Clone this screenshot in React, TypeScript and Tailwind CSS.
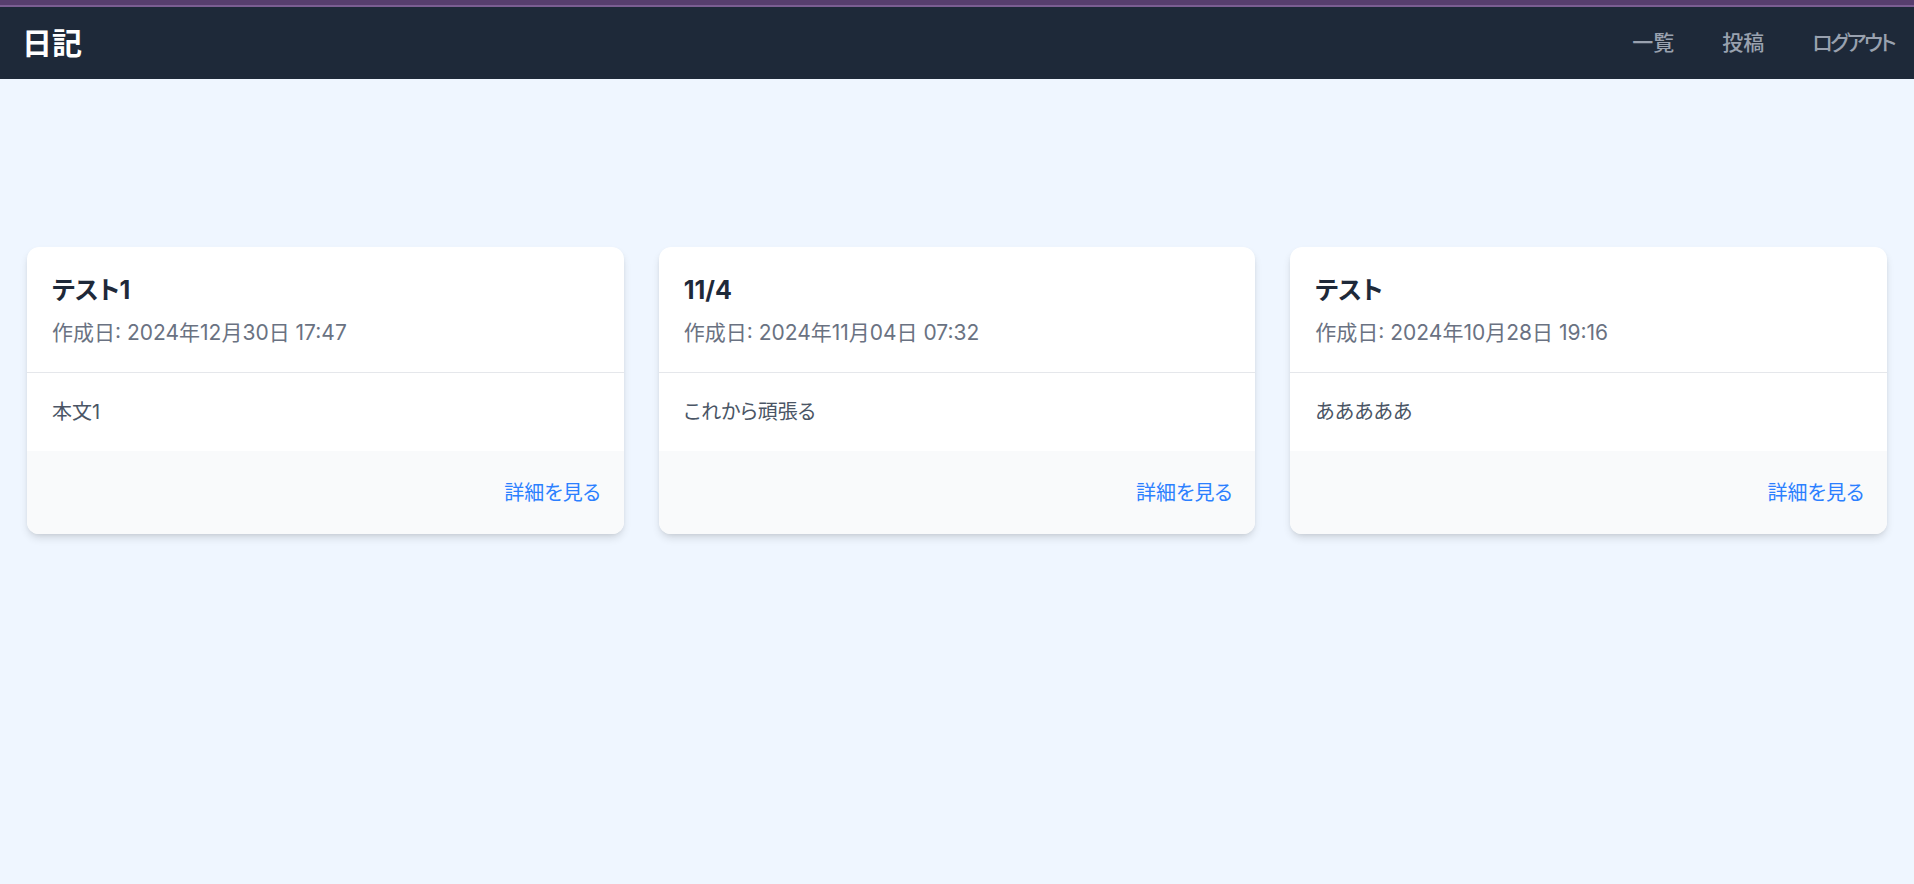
import React from 'react'

type Entry = {
  title: string
  createdAt: string
  body: string
}

const entries: Entry[] = [
  { title: 'テスト1', createdAt: '2024年12月30日 17:47', body: '本文1' },
  { title: '11/4', createdAt: '2024年11月04日 07:32', body: 'これから頑張る' },
  { title: 'テスト', createdAt: '2024年10月28日 19:16', body: 'あああああ' },
]

function Header() {
  return (
    <header>
      <div className="h-[5px] bg-[#573e6e]" />
      <div className="h-[2px] bg-[#7b5e93]" />
      <div className="h-[72px] bg-gray-800 flex items-center justify-between pl-[22px] pr-[20px]">
        <h1 className="text-[30px] leading-none font-bold text-white">日記</h1>
        <nav className="flex items-center gap-12">
          <a href="#" className="text-[21px] leading-[30px] font-medium text-gray-400">一覧</a>
          <a href="#" className="text-[21px] leading-[30px] font-medium text-gray-400">投稿</a>
          <a href="#" className="text-[21px] leading-[30px] font-medium text-gray-400 tracking-[-2.5px]">ログアウト</a>
        </nav>
      </div>
    </header>
  )
}

function EntryCard({ entry }: { entry: Entry }) {
  return (
    <div className="bg-white rounded-xl overflow-hidden shadow-[0_5px_8px_-1px_rgba(0,0,0,0.12),0_2px_5px_-2px_rgba(0,0,0,0.1)]">
      <div className="px-[25px] pt-[26px] pb-[24px] border-b border-gray-200">
        <h2 className="text-[25px] leading-[35px] font-bold text-gray-800">{entry.title}</h2>
        <p className="mt-[10px] text-[21px] leading-[30px] text-gray-500">作成日: {entry.createdAt}</p>
      </div>
      <div className="px-[25px] py-[24px]">
        <p className="text-[20px] leading-[30px] text-gray-600">{entry.body}</p>
      </div>
      <div className="bg-gray-50 pl-[25px] pr-[23px] pt-[27px] pb-[26px] flex justify-end">
        <a href="#" className="text-[20px] leading-[30px] text-blue-500">
          詳細を見る
        </a>
      </div>
    </div>
  )
}

export default function App() {
  return (
    <div className="min-h-screen bg-blue-50 font-['Inter','Noto_Sans_CJK_JP',sans-serif] [font-feature-settings:'palt']">
      <Header />
      <main className="px-[27px] pt-[168px] pb-10">
        <div className="grid grid-cols-3 gap-[35px]">
          {entries.map((entry) => (
            <EntryCard key={entry.title} entry={entry} />
          ))}
        </div>
      </main>
    </div>
  )
}
